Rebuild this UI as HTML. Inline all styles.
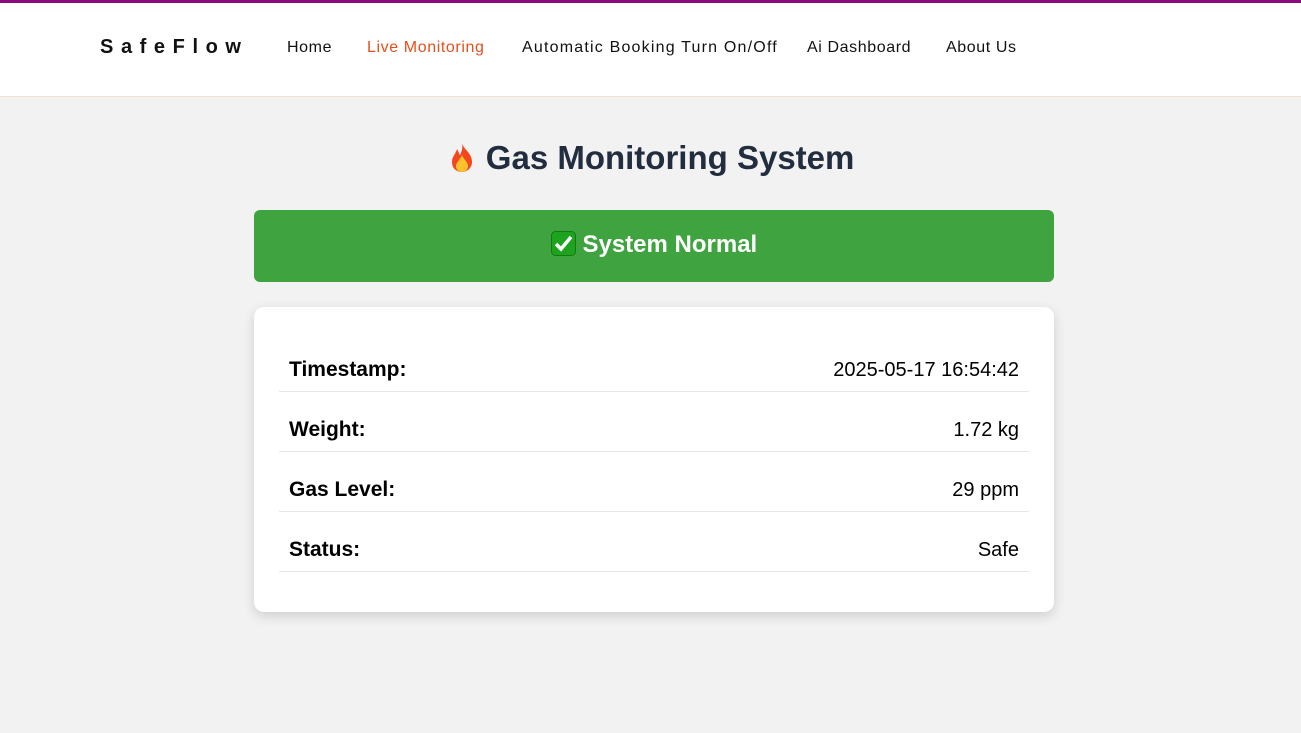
<!DOCTYPE html>
<html><head><meta charset="utf-8"><style>
*{margin:0;padding:0;box-sizing:border-box}
body{width:1301px;height:733px;background:#f2f2f2;font-family:"Liberation Sans",sans-serif;overflow:hidden}
.nav{height:97px;background:#fff;border-top:3px solid #8b0a7f;border-bottom:1px solid #f0e2c4;position:relative}
.logo{position:absolute;left:100px;top:33px;font-weight:bold;font-size:20px;letter-spacing:7.6px;color:#111}
.nav span{position:absolute;top:36px;font-size:16px;color:#111;letter-spacing:0.6px;white-space:nowrap}
h1{position:absolute;top:139px;left:0;width:1301px;text-align:center;font-size:33px;color:#222d3f;font-weight:bold}
.ok{position:absolute;left:254px;top:210px;width:800px;height:72px;background:#3fa43f;border-radius:6px;color:#fff;font-weight:bold;font-size:24px;text-align:center;line-height:70px}
.card{position:absolute;left:254px;top:307px;width:800px;height:305px;background:#fff;border-radius:10px;box-shadow:0 4px 12px rgba(0,0,0,.15);padding:25px 25px}
.row{height:60px;border-bottom:1px solid #e6e6e6;display:flex;justify-content:space-between;align-items:flex-end;padding:0 10px 9px;font-size:21px;color:#000}
.row span{font-size:20px}
svg{vertical-align:-4px}
</style></head><body>
<div class="nav"><div class="logo">SafeFlow</div>
<span style="left:287px">Home</span><span style="left:367px;color:#e5501c">Live Monitoring</span><span style="left:522px;letter-spacing:1.2px">Automatic Booking Turn On/Off</span><span style="left:807px">Ai Dashboard</span><span style="left:946px">About Us</span></div>
<h1><svg width="30" height="32" viewBox="0 0 30 32"><path d="M15 2C17 9 25 12 25 21C25 27 20 31 15 31C9 31 5 27 5 21C5 15 9 13 10 8C12 11 12 13 13 14C15 10 16 6 15 2Z" fill="#f2471f"/><path d="M15 14C17 19 21 21 21 25C21 29 18 31 15 31C12 31 9 29 9 25C9 22 12 20 15 14Z" fill="#ffc02e"/></svg> Gas Monitoring System</h1>
<div class="ok"><svg width="25" height="25" viewBox="0 0 25 25"><rect x="0.5" y="0.5" width="24" height="24" rx="4" fill="#1ea31e" stroke="#137a13"/><path d="M5 13L10 18L20 6" fill="none" stroke="#fff" stroke-width="3.5"/></svg> System Normal</div>
<div class="card">
<div class="row"><b>Timestamp:</b><span>2025-05-17 16:54:42</span></div>
<div class="row"><b>Weight:</b><span>1.72 kg</span></div>
<div class="row"><b>Gas Level:</b><span>29 ppm</span></div>
<div class="row"><b>Status:</b><span>Safe</span></div>
</div>
</body></html>
